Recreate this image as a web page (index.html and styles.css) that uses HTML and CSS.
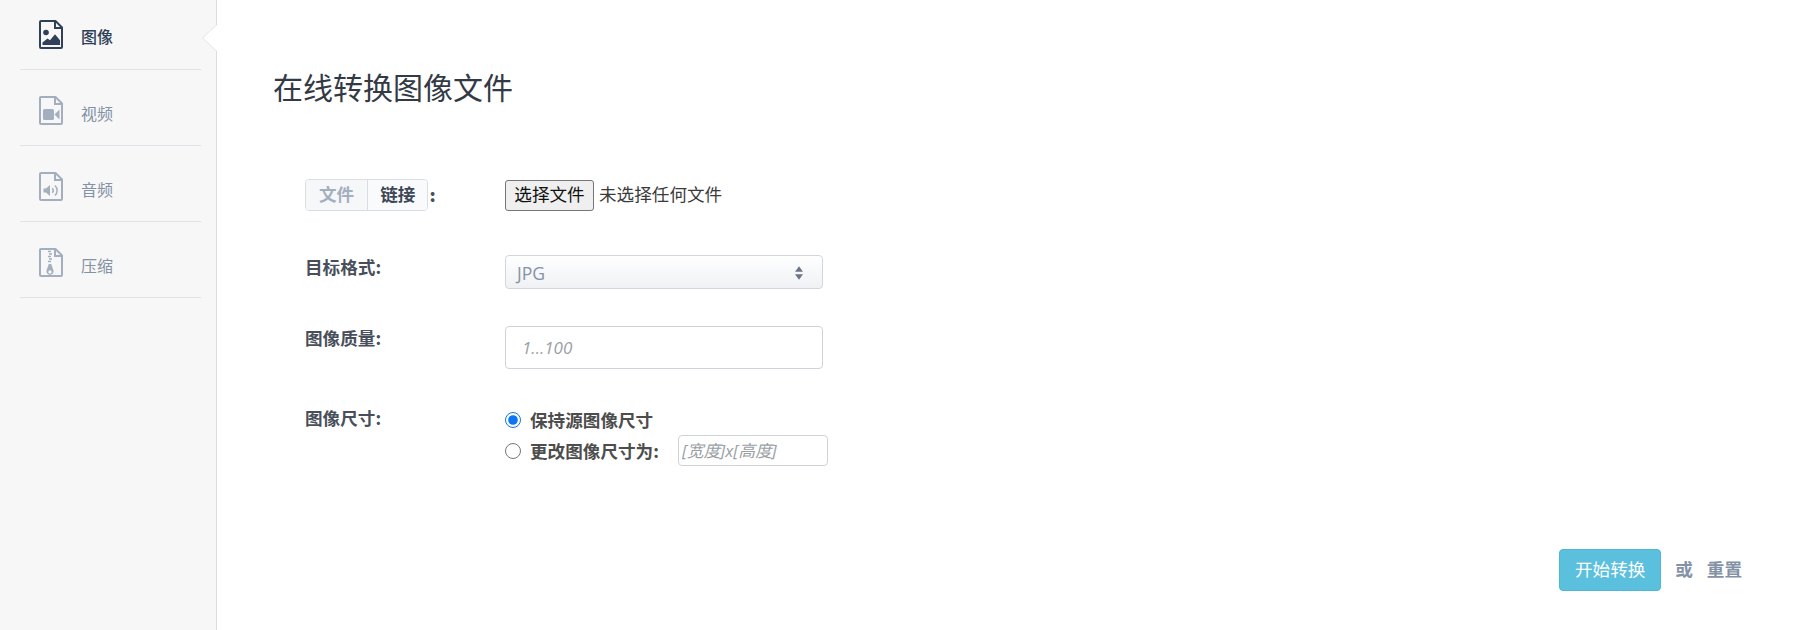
FILE: index.html
```html
<!DOCTYPE html>
<html lang="zh-CN">
<head>
<meta charset="utf-8">
<title>在线转换图像文件</title>
<link rel="stylesheet" href="styles.css">
</head>
<body>
<div class="page">
  <aside class="sidebar">
    <a class="nav-item active">
      <svg class="nav-icon" viewBox="0 0 24 29"><path class="doc" d="M1 2a1 1 0 0 1 1-1h14.500L23 7.500V27a1 1 0 0 1-1 1H2a1 1 0 0 1-1-1Z"/><path class="doc" d="M16 1v7h7"/><circle class="fill" cx="7" cy="12.500" r="2.800"/><path class="fill" d="M3.500 25v-2.500l5-4 2.500 1.800 5-6 5 6V25Z"/></svg>
      <span>图像</span>
    </a>
    <a class="nav-item">
      <svg class="nav-icon" viewBox="0 0 24 29"><path class="doc" d="M1 2a1 1 0 0 1 1-1h14.500L23 7.500V27a1 1 0 0 1-1 1H2a1 1 0 0 1-1-1Z"/><path class="doc" d="M16 1v7h7"/><rect class="fill" x="4" y="13" width="11" height="11" rx="1.500"/><path class="fill" d="M15.500 18.500l5-5v10Z"/></svg>
      <span>视频</span>
    </a>
    <a class="nav-item">
      <svg class="nav-icon" viewBox="0 0 24 29"><path class="doc" d="M1 2a1 1 0 0 1 1-1h14.500L23 7.500V27a1 1 0 0 1-1 1H2a1 1 0 0 1-1-1Z"/><path class="doc" d="M16 1v7h7"/><path class="fill" d="M4.500 16.500h2.500l4-3.500v11l-4-3.500H4.500Z"/><path class="thin" d="M13.300 16.200a3.400 3.400 0 0 1 0 4.600M16 13.500a7 7 0 0 1 0 10"/></svg>
      <span>音频</span>
    </a>
    <a class="nav-item">
      <svg class="nav-icon" viewBox="0 0 24 29"><path class="doc" d="M1 2a1 1 0 0 1 1-1h14.500L23 7.500V27a1 1 0 0 1-1 1H2a1 1 0 0 1-1-1Z"/><path class="doc" d="M16 1v7h7"/><path class="thin" d="M9 3.500h3M10 6h3M9 8.500h3M10 11h3M9 13.500h3"/><path class="fill" fill-rule="evenodd" d="M9.800 16h2.400l2.300 6.500a3.600 3.600 0 1 1-7 0Zm1.200 6.300a1.700 1.700 0 1 0 .01 0Z"/></svg>
      <span>压缩</span>
    </a>
  </aside>
  <main class="content">
    <h1 class="title">在线转换图像文件</h1>
    <form class="form">
      <div class="row row-file">
        <div class="label">
          <span class="toggle"><span class="tab tab-off">文件</span><span class="tab tab-on">链接</span></span><b class="colon">:</b>
        </div>
        <div class="file-field"><button type="button" class="file-btn">选择文件</button><span class="file-name">未选择任何文件</span></div>
      </div>
      <div class="row row-format">
        <div class="label">目标格式:</div>
        <div class="select">
          <span>JPG</span>
          <svg class="select-arrows" viewBox="0 0 8 14"><path d="M4 1l3.500 5h-7ZM4 13l3.500-5h-7Z"/></svg>
        </div>
      </div>
      <div class="row row-quality">
        <div class="label">图像质量:</div>
        <input class="text-input" type="text" placeholder="1...100">
      </div>
      <div class="row row-size">
        <div class="label">图像尺寸:</div>
        <div class="size-options">
          <label class="radio-line"><input type="radio" name="size" checked>保持源图像尺寸</label>
          <label class="radio-line"><input type="radio" name="size">更改图像尺寸为:<input class="size-input" type="text" placeholder="[宽度]x[高度]"></label>
        </div>
      </div>
      <div class="actions">
        <button type="button" class="submit">开始转换</button>
        <span class="or">或</span>
        <a class="reset">重置</a>
      </div>
    </form>
  </main>
</div>
</body>
</html>
```

FILE: styles.css
```css
* { box-sizing: border-box; }
html, body { margin: 0; height: 100%; }
body {
  font-family: "Noto Sans CJK SC", "Open Sans", sans-serif;
  font-size: 17.600px;
  color: #484f5b;
  background: #fff;
  overflow: hidden;
}
.page { display: flex; height: 630px; }
.sidebar {
  width: 217px;
  flex: none;
  padding: 0 15px 0 20px;
  background: #f7f7f8;
  border-right: 1px solid #d9dee6;
}
.nav-item {
  display: flex;
  align-items: flex-start;
  gap: 18px;
  height: 76px;
  padding: 26px 0 0 19px;
  color: #8492a6;
  border-bottom: 1px solid #dfe3ea;
  font-size: 16px;
  line-height: 24px;
}
.nav-item span { margin-top: 5px; }
.nav-item.active { height: 70px; padding-top: 20px; color: #2f3f55; position: relative; }
.nav-item.active span { font-weight: 500; margin-top: 4px; }
.nav-icon {
  width: 24px;
  height: 29px;
  flex: none;
  color: #a3afbf;
}
.nav-item.active .nav-icon { color: #2f4058; }
.doc { fill: none; stroke: currentColor; stroke-width: 2; }
.fill { fill: currentColor; }
.thin { fill: none; stroke: currentColor; stroke-width: 1.500; }
.active::before,
.active::after {
  content: "";
  position: absolute;
  top: 25px;
  right: -15px;
  width: 0;
  height: 0;
  border-top: 13px solid transparent;
  border-bottom: 13px solid transparent;
  border-right: 14px solid #dfe3ea;
}
.active::after { right: -16px; border-right-color: #fff; }
.content { flex: 1; padding: 0 58px 0 56px; min-width: 0; }
.title {
  margin: 0;
  padding-top: 64px;
  font-size: 30px;
  font-weight: 400;
  line-height: 44px;
  color: #333a45;
}
.form { padding-left: 32px; }
.row { display: grid; grid-template-columns: 200px 1fr; align-items: start; }
.label { font-weight: 700; line-height: 24px; color: #484f5b; }
.row-file { margin-top: 71px; }
.row-file .label { display: flex; align-items: center; }
.toggle {
  display: inline-flex;
  height: 32px;
  border: 1px solid #d9dee6;
  border-radius: 4px;
  overflow: hidden;
  line-height: 28px;
}
.tab { padding: 0 13px; display: block; }
.tab-off { color: #a3afbf; background: #f6f7f8; border-right: 1px solid #d9dee6; }
.tab-on { color: #3c4656; background: #f9fafb; padding: 0 12px; }
.colon { margin-left: 1px; }
.file-field { display: flex; align-items: center; height: 32px; color: #3b3b3b; }
.file-btn {
  font: inherit;
  height: 31px;
  width: 89px;
  padding: 0 0 3px;
  color: #111;
  background: #efefef;
  border: 1px solid #767676;
  border-radius: 3px;
}
.file-name { margin: 0 0 3px 5px; }
.row-format { margin-top: 44px; }
.select {
  width: 318px;
  height: 34px;
  padding: 2px 11px 0;
  display: flex;
  align-items: center;
  justify-content: space-between;
  font-family: "Open Sans", sans-serif;
  color: #8492a6;
  border: 1px solid #d2d7df;
  border-radius: 4px;
  background: linear-gradient(#fff, #eff1f4);
}
.select-arrows { width: 10px; height: 16px; margin-right: 7px; fill: #6b7686; }
.row-quality { margin-top: 37px; }
.text-input {
  width: 318px;
  height: 43px;
  padding: 0 16px;
  font-family: "Open Sans", sans-serif;
  font-size: 17px;
  border: 1px solid #cfd3d9;
  border-radius: 4px;
  outline: none;
}
input::placeholder { color: #9a9fa6; font-style: italic; opacity: 1; }
.row-size { margin-top: 35px; }
.row-size .label { padding-top: 2px; }
.size-options { display: flex; flex-direction: column; }
.radio-line {
  display: flex;
  align-items: center;
  font-weight: 700;
  height: 31px;
  color: #4d4d4d;
}
.radio-line input[type=radio] {
  width: 16px;
  height: 16px;
  margin: 0 9px 0 0;
  accent-color: #0b76ef;
}
.size-input {
  width: 150px;
  height: 31px;
  margin-left: 19px;
  padding: 0 3px;
  font-family: "Open Sans", "Noto Sans CJK SC", sans-serif;
  font-size: 16.800px;
  font-weight: 400;
  border: 1px solid #cfd3d9;
  border-radius: 4px;
  outline: none;
}
.actions {
  display: flex;
  justify-content: flex-end;
  align-items: center;
  margin-top: 83px;
}
.submit {
  font: inherit;
  width: 102px;
  height: 42px;
  padding: 0 0 3px;
  color: #fff;
  background: #5bc0de;
  border: 1px solid #4fb6d6;
  border-radius: 4px;
}
.or { margin: 0 0 3px 14px; font-weight: 700; color: #8492a6; }
.reset { margin: 0 0 3px 14px; font-weight: 700; color: #8492a6; }
```
